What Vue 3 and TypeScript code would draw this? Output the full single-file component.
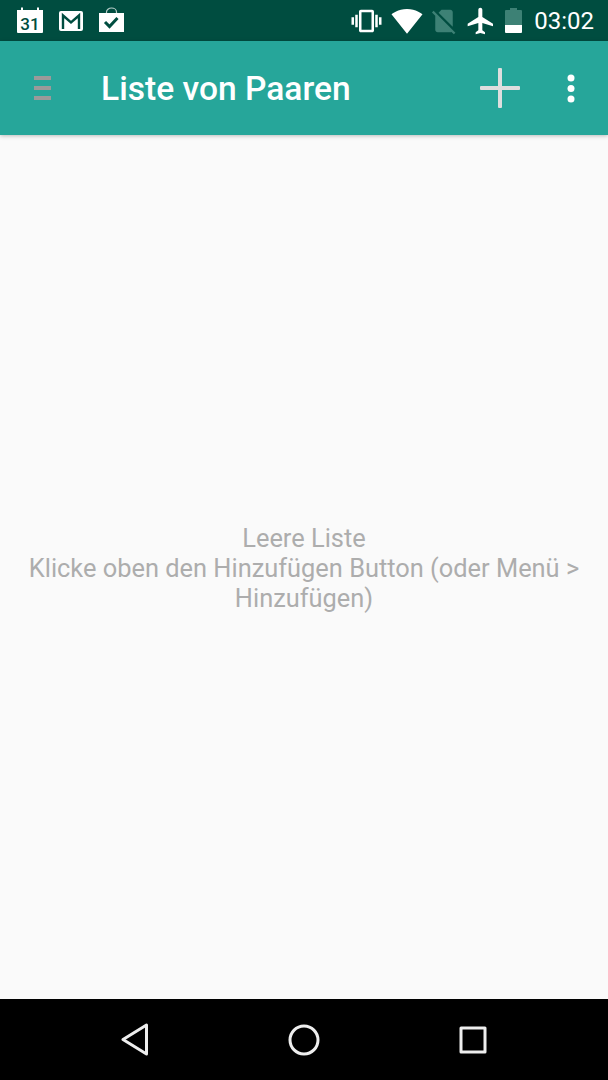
<script setup lang="ts">
// leere Liste: nur Toolbar und Hinweistext
const title = "Liste von Paaren"
const clock = "03:02"
const hint = "Klicke oben den Hinzufügen Button (oder Menü > Hinzufügen)"
</script>

<template>
  <div class="screen">
    <div class="status">
      <div class="status-left">
        <svg class="ic-cal" width="26" height="26" viewBox="0 0 26 26">
          <path fill="#fff" d="M0 3h4V0.500h2V3h14V0.500h2V3h4v22a1 1 0 0 1-1 1H1a1 1 0 0 1-1-1z" />
          <text x="13" y="23" text-anchor="middle" class="cal-num">31</text>
        </svg>
        <svg class="ic-mail" width="24" height="20" viewBox="0 0 24 20">
          <rect width="24" height="20" rx="2" fill="#fff" />
          <path fill="none" stroke="#004d40" stroke-width="2.400" d="M4 18V4.500l8 7 8-7V18" />
        </svg>
        <svg class="ic-bag" width="25" height="25" viewBox="0 0 25 25">
          <path fill="none" stroke="#b9cfca" stroke-width="1.200" d="M7.500 6V5a5 4 0 0 1 10 0v1" />
          <path fill="#fff" d="M0 6h25v19H0z" />
          <path fill="none" stroke="#004d40" stroke-width="3" d="M6 15l4.500 4.500 8-8.500" />
        </svg>
      </div>
      <div class="status-right">
        <svg class="ic-vib" width="31" height="30" viewBox="0 0 24 24" fill="#fff">
          <path d="M0 15h2V9H0v6zm3 2h2V7H3v10zm19-8v6h2V9h-2zm-3 8h2V7h-2v10zM16.500 3h-9C6.670 3 6 3.670 6 4.500v15c0 .83.67 1.500 1.500 1.500h9c.83 0 1.500-.67 1.500-1.500v-15c0-.83-.67-1.500-1.500-1.500zM16 19H8V5h8v14z" />
        </svg>
        <svg class="ic-wifi" width="32" height="32" viewBox="0 0 24 24" fill="#fff">
          <path d="M12.010 21.490L23.640 7c-.45-.34-4.930-4-11.640-4C5.280 3 .81 6.660.36 7l11.640 14.500.01-.01z" />
        </svg>
        <svg class="ic-sim" width="30" height="30" viewBox="0 0 24 24" fill="#3d8175">
          <path d="M18.990 5c0-1.100-.89-2-1.990-2h-7L7.660 5.340 19 16.680 18.990 5zM3.650 3.880L2.380 5.150 5 7.770V19c0 1.100.9 2 2 2h10.010c.35 0 .67-.1.96-.26l1.880 1.880 1.270-1.270L3.650 3.880z" />
        </svg>
        <svg class="ic-plane" width="32" height="32" viewBox="0 0 24 24" fill="#fff">
          <path d="M21 16v-2l-8-5V3.500c0-.83-.67-1.500-1.500-1.500S10 2.670 10 3.500V9l-8 5v2l8-2.500V19l-2 1.500V22l3.500-1 3.500 1v-1.500L13 19v-5.500l8 2.500z" />
        </svg>
        <svg class="ic-bat" width="17" height="25" viewBox="0 0 17 25">
          <path fill="#3d8175" d="M5 0h7v2h4a1 1 0 0 1 1 1v14H0V3a1 1 0 0 1 1-1h4z" />
          <path fill="#fff" d="M0 17h17v7a1 1 0 0 1-1 1H1a1 1 0 0 1-1-1z" />
        </svg>
        <span class="clock">{{ clock }}</span>
      </div>
    </div>

    <header class="toolbar">
      <svg class="burger" width="17" height="24" viewBox="0 0 17 24" fill="#9a9a9a">
        <rect width="17" height="4" />
        <rect y="10" width="17" height="4" />
        <rect y="20" width="17" height="4" />
      </svg>
      <h1 class="title">{{ title }}</h1>
      <svg class="plus" width="40" height="40" viewBox="0 0 40 40" fill="#dedede">
        <rect x="18" width="4" height="40" rx="1" />
        <rect y="18" width="40" height="4" rx="1" />
      </svg>
      <svg class="dots" width="8" height="29" viewBox="0 0 8 29" fill="#fff">
        <circle cx="4" cy="4" r="3.500" />
        <circle cx="4" cy="14.500" r="3.500" />
        <circle cx="4" cy="25" r="3.500" />
      </svg>
    </header>

    <main class="content">
      <p class="empty">Leere Liste<br />{{ hint }}</p>
    </main>

    <nav class="navbar">
      <svg width="28" height="33" viewBox="0 0 28 33" fill="none" stroke="#eee" stroke-width="3" stroke-linejoin="round">
        <path d="M2 16.500L25.500 2v29z" />
      </svg>
      <svg width="32" height="32" viewBox="0 0 32 32" fill="none" stroke="#eee" stroke-width="3">
        <circle cx="16" cy="16" r="14" />
      </svg>
      <svg width="28" height="28" viewBox="0 0 28 28" fill="none" stroke="#eee" stroke-width="3" stroke-linejoin="round">
        <rect x="2" y="2" width="24" height="24" />
      </svg>
    </nav>
  </div>
</template>

<style>
html,
body {
  margin: 0;
  background: #fafafa;
}
</style>

<style scoped>
.screen {
  width: 608px;
  height: 1080px;
  display: flex;
  flex-direction: column;
  overflow: hidden;
  background: #fafafa;
  font-family: Roboto, "Noto Sans", sans-serif;
}

.status {
  height: 41px;
  flex: none;
  display: flex;
  align-items: center;
  justify-content: space-between;
  padding: 0 14px 0 17px;
  background: #004d40;
}

.status-left,
.status-right {
  display: flex;
  align-items: center;
}

.status-left {
  gap: 16px;
}

.ic-cal {
  margin-bottom: 1px;
}

.ic-mail {
  margin-top: 1px;
}

.ic-bag {
  margin-bottom: 3px;
}

.cal-num {
  font: 500 17px Roboto, sans-serif;
  fill: #004d40;
}

.ic-wifi {
  margin-left: 9px;
}

.ic-sim {
  margin-left: 6px;
}

.ic-plane {
  margin-left: 6px;
}

.ic-bat {
  margin-left: 8px;
}

.clock {
  margin-left: 12px;
  font-size: 24px;
  line-height: 28px;
  color: #fff;
}

.toolbar {
  position: relative;
  height: 94px;
  flex: none;
  display: flex;
  align-items: center;
  padding: 0 33px 0 34px;
  background: #26a69a;
  box-shadow: 0 1px 4px rgba(0, 0, 0, 0.25);
}

.title {
  flex: 1;
  margin: 0 0 0 50px;
  font-size: 33.600px;
  font-weight: 500;
  color: #fff;
}

.dots {
  margin-left: 47px;
}

.content {
  flex: 1;
  display: flex;
  align-items: center;
  justify-content: center;
  padding: 2px 24px 0;
}

.empty {
  margin: 0;
  font-size: 25.400px;
  line-height: 30px;
  text-align: center;
  color: #adadad;
}

.navbar {
  height: 81px;
  flex: none;
  display: flex;
  align-items: center;
  justify-content: space-between;
  padding: 0 121px 0 121px;
  background: #000;
}
</style>
